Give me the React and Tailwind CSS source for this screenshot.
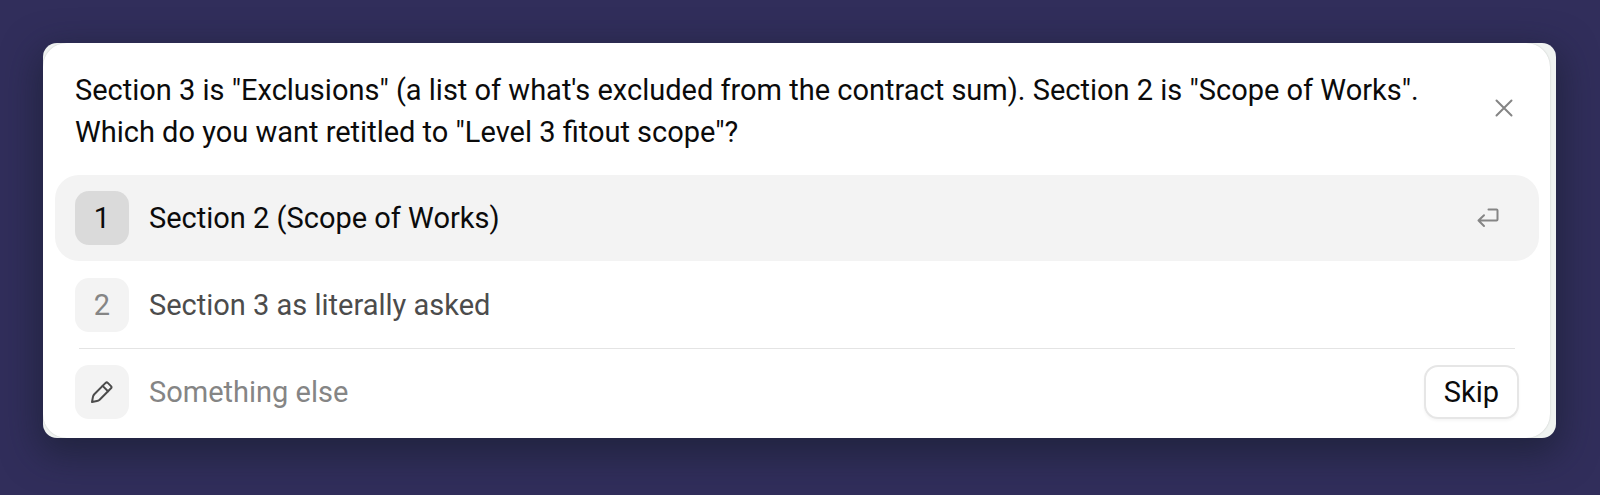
import React from "react";

function CloseIcon() {
  return (
    <svg width="18" height="18" viewBox="0 0 18 18" fill="none" stroke="currentColor" strokeWidth="2" strokeLinecap="round" aria-hidden="true">
      <path d="M1.500 1.500 16.500 16.500M16.500 1.500 1.500 16.500" />
    </svg>
  );
}

function ReturnIcon() {
  return (
    <svg width="22" height="20" viewBox="0 0 22 20" fill="none" stroke="currentColor" strokeWidth="2" strokeLinecap="round" strokeLinejoin="round" aria-hidden="true">
      <path d="M11.500 1.500H19.500Q20.500 1.500 20.500 2.500V11.500Q20.500 12.500 19.500 12.500H1.500M7 7.200 1.500 12.500 7 18" />
    </svg>
  );
}

function PencilIcon() {
  return (
    <svg width="22" height="22" viewBox="0 0 22 22" fill="none" stroke="currentColor" strokeWidth="2" strokeLinecap="round" strokeLinejoin="round" aria-hidden="true">
      <path d="M14.600 1.900Q15.700.9 16.800 1.900L20 5.100Q21.100 6.200 20 7.300L8.600 18.700Q7.400 19.800 5.900 20.100L1 21 1.900 16.100Q2.200 14.500 3.300 13.300Z" />
      <path d="M11.600 4.900 17 10.300" />
    </svg>
  );
}

function Badge({ active, children }) {
  return (
    <span
      className={
        active
          ? "flex size-[54px] shrink-0 items-center justify-center rounded-[14px] bg-[#dadada] text-[#0b0b0b]"
          : "flex size-[54px] shrink-0 items-center justify-center rounded-[14px] bg-[#f3f3f3] text-[#858585]"
      }
    >
      {children}
    </span>
  );
}

export default function App() {
  return (
    <main className="min-h-screen bg-[#312e5b] pt-[43px] pr-11 pb-14 pl-[43px] font-['Roboto',sans-serif] text-[29px] leading-[42px] text-[#0b0b0b]">
      <div className="overflow-hidden rounded-[14px] bg-[#f0f3f1] pr-1.5 shadow-[0_12px_36px_4px_rgba(22,28,44,0.6)]">
        <section aria-labelledby="question" className="rounded-[24px] bg-white pr-[11px] pb-[3px] pl-3 shadow-[0_0_2px_rgba(0,0,0,0.18)]">
          <header className="flex items-start justify-between px-5 pt-[26px] pb-[22px]">
            <h1 id="question" className="max-w-[1380px]">
              Section 3 is "Exclusions" (a list of what's excluded from the contract sum). Section 2 is "Scope of Works". Which do you want retitled to "Level 3 fitout scope"?
            </h1>
            <button type="button" aria-label="Close" className="mt-6 flex size-[30px] shrink-0 items-center justify-center text-[#858585]">
              <CloseIcon />
            </button>
          </header>

          <button type="button" className="flex h-[86px] w-full items-center gap-5 rounded-[24px] bg-[#f3f3f3] pr-10 pl-5 text-left">
            <Badge active>1</Badge>
            <span className="grow">Section 2 (Scope of Works)</span>
            <span className="text-[#858585]">
              <ReturnIcon />
            </span>
          </button>

          <button type="button" className="flex h-[87px] w-full items-center gap-5 rounded-[24px] px-5 text-left text-[#4c4c4c]">
            <Badge>2</Badge>
            <span>Section 3 as literally asked</span>
          </button>

          <hr className="mx-6 border-[#e4e4e4]" />

          <div className="flex h-[86px] items-center gap-5 px-5">
            <label htmlFor="other" aria-label="Something else">
              <Badge>
                <span className="text-[#4c4c4c]">
                  <PencilIcon />
                </span>
              </Badge>
            </label>
            <input id="other" type="text" placeholder="Something else" className="min-w-0 grow bg-transparent outline-none placeholder:text-[#858585]" />
            <button type="button" className="h-[54px] rounded-[14px] border-2 border-[#e6e6e6] bg-white px-[18px] shadow-[0_2px_3px_rgba(0,0,0,0.04)]">
              Skip
            </button>
          </div>
        </section>
      </div>
    </main>
  );
}
